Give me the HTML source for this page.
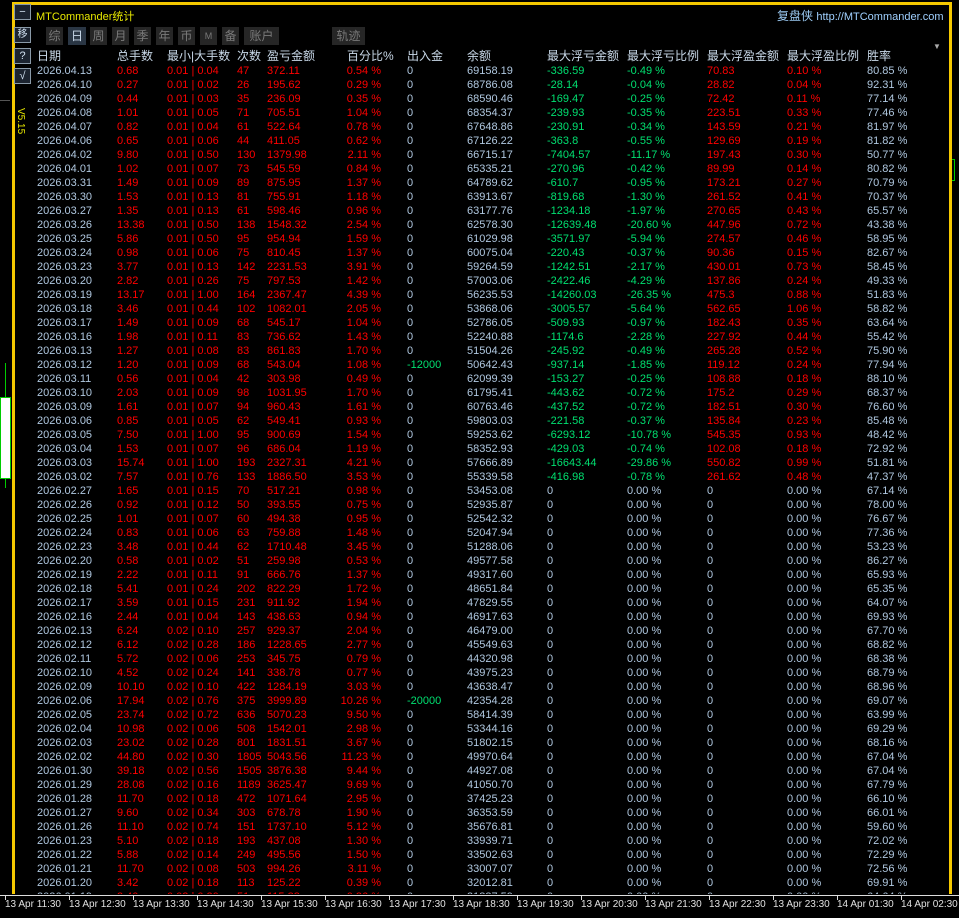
<!DOCTYPE html>
<html><head><meta charset="utf-8">
<style>
*{margin:0;padding:0;box-sizing:border-box}
body{width:959px;height:918px;background:#000;overflow:hidden;position:relative;font-family:"Liberation Sans","Noto Sans CJK SC",sans-serif;font-size:11px;color:#b0c8e0}
.yl{position:absolute;background:#f5c800}
.btn{position:absolute;width:17px;height:16px;border:1px solid #8a9aa8;background:#1c2430;color:#d0e0f0;font-size:11px;line-height:14px;text-align:center}
.tab{position:absolute;top:27px;height:18px;background:#262626;color:#7a7a7a;font-size:12px;line-height:18px;text-align:center}
.tab.on{background:#2a3644;color:#c8d8e8}
#tb{position:absolute;left:14px;top:0;width:936px;height:894px;overflow:hidden}
.h{position:absolute;top:48px;left:0;width:940px;height:16px;font-size:12px;line-height:16px;color:#c8d8e8}
.h span{position:absolute;white-space:nowrap}
.r{position:absolute;left:0;width:940px;height:14px;line-height:14px;white-space:nowrap}
.r span{position:absolute}
.r span:nth-child(1){left:23px}
.r span:nth-child(2){left:103px;color:#f00}
.r span:nth-child(3){left:153px;color:#f00}
.r span:nth-child(4){left:223px;color:#f00}
.r span:nth-child(5){left:253px;color:#f00}
.r span:nth-child(6){left:313px;width:54px;text-align:right;color:#f00}
.r span:nth-child(7){left:393px}
.r span:nth-child(8){left:453px}
.r span:nth-child(9){left:533px;color:#00e070}
.r span:nth-child(10){left:613px;color:#00e070}
.r span:nth-child(11){left:693px;color:#f00}
.r span:nth-child(12){left:773px;color:#f00}
.r span:nth-child(13){left:853px}
.r span.g{color:#00e070}
.z span:nth-child(9),.z span:nth-child(10),.z span:nth-child(11),.z span:nth-child(12){color:#b0c8e0}
.ax{position:absolute;top:895px;left:0;width:959px;height:1px;background:#ddd}
.tk{position:absolute;top:896px;width:1px;height:4px;background:#ddd}
.tl{position:absolute;top:899px;color:#e0e0e0;font-size:10px;white-space:nowrap}
</style></head><body>
<div class="yl" style="left:12px;top:2px;width:940px;height:3px"></div>
<div class="yl" style="left:12px;top:2px;width:3px;height:892px"></div>
<div class="yl" style="left:949px;top:2px;width:3px;height:892px"></div>
<div style="position:absolute;left:0;top:100px;width:10px;height:1px;background:#555"></div>
<div style="position:absolute;left:5px;top:363px;width:1px;height:125px;background:#0c0"></div>
<div style="position:absolute;left:0;top:397px;width:11px;height:82px;background:#fff;border:1px solid #0c0"></div>
<div style="position:absolute;left:952px;top:159px;width:3px;height:22px;border:1px solid #0c0;border-left:none"></div>

<div class="btn" style="left:14px;top:4px">−</div>
<div class="btn" style="left:14px;top:27px;font-size:10px">移</div>
<div class="btn" style="left:14px;top:48px">?</div>
<div class="btn" style="left:14px;top:68px">√</div>
<div style="position:absolute;left:36px;top:8px;color:#e8e800;font-size:11px">MTCommander统计</div>
<div style="position:absolute;left:777px;top:7px;color:#9ac8f0;font-size:12px">复盘侠 <span style="font-size:11px;color:#a0d0ff">http://MTCommander.com</span></div>
<div style="position:absolute;top:108px;color:#e8e800;font-size:10px;transform:rotate(90deg);transform-origin:left top;left:26px">V5.15</div>
<div style="position:absolute;left:933px;top:42px;color:#aaa;font-size:8px">▼</div>

<div class="tab" style="left:46px;width:17px">综</div>
<div class="tab on" style="left:68px;width:18px">日</div>
<div class="tab" style="left:90px;width:17px">周</div>
<div class="tab" style="left:112px;width:17px">月</div>
<div class="tab" style="left:134px;width:17px">季</div>
<div class="tab" style="left:156px;width:17px">年</div>
<div class="tab" style="left:178px;width:17px">币</div>
<div class="tab" style="left:200px;width:17px;font-size:9px">M</div>
<div class="tab" style="left:222px;width:17px">备</div>
<div class="tab" style="left:244px;width:35px">账户</div>
<div class="tab" style="left:332px;width:33px">轨迹</div>

<div id="tb">
<div class="h"><span style="left:23px">日期</span><span style="left:103px">总手数</span><span style="left:153px">最小|大手数</span><span style="left:223px">次数</span><span style="left:253px">盈亏金额</span><span style="left:333px">百分比%</span><span style="left:393px">出入金</span><span style="left:453px">余额</span><span style="left:533px">最大浮亏金额</span><span style="left:613px">最大浮亏比例</span><span style="left:693px">最大浮盈金额</span><span style="left:773px">最大浮盈比例</span><span style="left:853px">胜率</span></div>

<div class="r" style="top:64px"><span>2026.04.13</span><span>0.68</span><span>0.01 | 0.04</span><span>47</span><span>372.11</span><span>0.54 %</span><span>0</span><span>69158.19</span><span>-336.59</span><span>-0.49 %</span><span>70.83</span><span>0.10 %</span><span>80.85 %</span></div>
<div class="r" style="top:78px"><span>2026.04.10</span><span>0.27</span><span>0.01 | 0.02</span><span>26</span><span>195.62</span><span>0.29 %</span><span>0</span><span>68786.08</span><span>-28.14</span><span>-0.04 %</span><span>28.82</span><span>0.04 %</span><span>92.31 %</span></div>
<div class="r" style="top:92px"><span>2026.04.09</span><span>0.44</span><span>0.01 | 0.03</span><span>35</span><span>236.09</span><span>0.35 %</span><span>0</span><span>68590.46</span><span>-169.47</span><span>-0.25 %</span><span>72.42</span><span>0.11 %</span><span>77.14 %</span></div>
<div class="r" style="top:106px"><span>2026.04.08</span><span>1.01</span><span>0.01 | 0.05</span><span>71</span><span>705.51</span><span>1.04 %</span><span>0</span><span>68354.37</span><span>-239.93</span><span>-0.35 %</span><span>223.51</span><span>0.33 %</span><span>77.46 %</span></div>
<div class="r" style="top:120px"><span>2026.04.07</span><span>0.82</span><span>0.01 | 0.04</span><span>61</span><span>522.64</span><span>0.78 %</span><span>0</span><span>67648.86</span><span>-230.91</span><span>-0.34 %</span><span>143.59</span><span>0.21 %</span><span>81.97 %</span></div>
<div class="r" style="top:134px"><span>2026.04.06</span><span>0.65</span><span>0.01 | 0.06</span><span>44</span><span>411.05</span><span>0.62 %</span><span>0</span><span>67126.22</span><span>-363.8</span><span>-0.55 %</span><span>129.69</span><span>0.19 %</span><span>81.82 %</span></div>
<div class="r" style="top:148px"><span>2026.04.02</span><span>9.80</span><span>0.01 | 0.50</span><span>130</span><span>1379.98</span><span>2.11 %</span><span>0</span><span>66715.17</span><span>-7404.57</span><span>-11.17 %</span><span>197.43</span><span>0.30 %</span><span>50.77 %</span></div>
<div class="r" style="top:162px"><span>2026.04.01</span><span>1.02</span><span>0.01 | 0.07</span><span>73</span><span>545.59</span><span>0.84 %</span><span>0</span><span>65335.21</span><span>-270.96</span><span>-0.42 %</span><span>89.99</span><span>0.14 %</span><span>80.82 %</span></div>
<div class="r" style="top:176px"><span>2026.03.31</span><span>1.49</span><span>0.01 | 0.09</span><span>89</span><span>875.95</span><span>1.37 %</span><span>0</span><span>64789.62</span><span>-610.7</span><span>-0.95 %</span><span>173.21</span><span>0.27 %</span><span>70.79 %</span></div>
<div class="r" style="top:190px"><span>2026.03.30</span><span>1.53</span><span>0.01 | 0.13</span><span>81</span><span>755.91</span><span>1.18 %</span><span>0</span><span>63913.67</span><span>-819.68</span><span>-1.30 %</span><span>261.52</span><span>0.41 %</span><span>70.37 %</span></div>
<div class="r" style="top:204px"><span>2026.03.27</span><span>1.35</span><span>0.01 | 0.13</span><span>61</span><span>598.46</span><span>0.96 %</span><span>0</span><span>63177.76</span><span>-1234.18</span><span>-1.97 %</span><span>270.65</span><span>0.43 %</span><span>65.57 %</span></div>
<div class="r" style="top:218px"><span>2026.03.26</span><span>13.38</span><span>0.01 | 0.50</span><span>138</span><span>1548.32</span><span>2.54 %</span><span>0</span><span>62578.30</span><span>-12639.48</span><span>-20.60 %</span><span>447.96</span><span>0.72 %</span><span>43.38 %</span></div>
<div class="r" style="top:232px"><span>2026.03.25</span><span>5.86</span><span>0.01 | 0.50</span><span>95</span><span>954.94</span><span>1.59 %</span><span>0</span><span>61029.98</span><span>-3571.97</span><span>-5.94 %</span><span>274.57</span><span>0.46 %</span><span>58.95 %</span></div>
<div class="r" style="top:246px"><span>2026.03.24</span><span>0.98</span><span>0.01 | 0.06</span><span>75</span><span>810.45</span><span>1.37 %</span><span>0</span><span>60075.04</span><span>-220.43</span><span>-0.37 %</span><span>90.36</span><span>0.15 %</span><span>82.67 %</span></div>
<div class="r" style="top:260px"><span>2026.03.23</span><span>3.77</span><span>0.01 | 0.13</span><span>142</span><span>2231.53</span><span>3.91 %</span><span>0</span><span>59264.59</span><span>-1242.51</span><span>-2.17 %</span><span>430.01</span><span>0.73 %</span><span>58.45 %</span></div>
<div class="r" style="top:274px"><span>2026.03.20</span><span>2.82</span><span>0.01 | 0.26</span><span>75</span><span>797.53</span><span>1.42 %</span><span>0</span><span>57003.06</span><span>-2422.46</span><span>-4.29 %</span><span>137.86</span><span>0.24 %</span><span>49.33 %</span></div>
<div class="r" style="top:288px"><span>2026.03.19</span><span>13.17</span><span>0.01 | 1.00</span><span>164</span><span>2367.47</span><span>4.39 %</span><span>0</span><span>56235.53</span><span>-14260.03</span><span>-26.35 %</span><span>475.3</span><span>0.88 %</span><span>51.83 %</span></div>
<div class="r" style="top:302px"><span>2026.03.18</span><span>3.46</span><span>0.01 | 0.44</span><span>102</span><span>1082.01</span><span>2.05 %</span><span>0</span><span>53868.06</span><span>-3005.57</span><span>-5.64 %</span><span>562.65</span><span>1.06 %</span><span>58.82 %</span></div>
<div class="r" style="top:316px"><span>2026.03.17</span><span>1.49</span><span>0.01 | 0.09</span><span>68</span><span>545.17</span><span>1.04 %</span><span>0</span><span>52786.05</span><span>-509.93</span><span>-0.97 %</span><span>182.43</span><span>0.35 %</span><span>63.64 %</span></div>
<div class="r" style="top:330px"><span>2026.03.16</span><span>1.98</span><span>0.01 | 0.11</span><span>83</span><span>736.62</span><span>1.43 %</span><span>0</span><span>52240.88</span><span>-1174.6</span><span>-2.28 %</span><span>227.92</span><span>0.44 %</span><span>55.42 %</span></div>
<div class="r" style="top:344px"><span>2026.03.13</span><span>1.27</span><span>0.01 | 0.08</span><span>83</span><span>861.83</span><span>1.70 %</span><span>0</span><span>51504.26</span><span>-245.92</span><span>-0.49 %</span><span>265.28</span><span>0.52 %</span><span>75.90 %</span></div>
<div class="r" style="top:358px"><span>2026.03.12</span><span>1.20</span><span>0.01 | 0.09</span><span>68</span><span>543.04</span><span>1.08 %</span><span class="g">-12000</span><span>50642.43</span><span>-937.14</span><span>-1.85 %</span><span>119.12</span><span>0.24 %</span><span>77.94 %</span></div>
<div class="r" style="top:372px"><span>2026.03.11</span><span>0.56</span><span>0.01 | 0.04</span><span>42</span><span>303.98</span><span>0.49 %</span><span>0</span><span>62099.39</span><span>-153.27</span><span>-0.25 %</span><span>108.88</span><span>0.18 %</span><span>88.10 %</span></div>
<div class="r" style="top:386px"><span>2026.03.10</span><span>2.03</span><span>0.01 | 0.09</span><span>98</span><span>1031.95</span><span>1.70 %</span><span>0</span><span>61795.41</span><span>-443.62</span><span>-0.72 %</span><span>175.2</span><span>0.29 %</span><span>68.37 %</span></div>
<div class="r" style="top:400px"><span>2026.03.09</span><span>1.61</span><span>0.01 | 0.07</span><span>94</span><span>960.43</span><span>1.61 %</span><span>0</span><span>60763.46</span><span>-437.52</span><span>-0.72 %</span><span>182.51</span><span>0.30 %</span><span>76.60 %</span></div>
<div class="r" style="top:414px"><span>2026.03.06</span><span>0.85</span><span>0.01 | 0.05</span><span>62</span><span>549.41</span><span>0.93 %</span><span>0</span><span>59803.03</span><span>-221.58</span><span>-0.37 %</span><span>135.84</span><span>0.23 %</span><span>85.48 %</span></div>
<div class="r" style="top:428px"><span>2026.03.05</span><span>7.50</span><span>0.01 | 1.00</span><span>95</span><span>900.69</span><span>1.54 %</span><span>0</span><span>59253.62</span><span>-6293.12</span><span>-10.78 %</span><span>545.35</span><span>0.93 %</span><span>48.42 %</span></div>
<div class="r" style="top:442px"><span>2026.03.04</span><span>1.53</span><span>0.01 | 0.07</span><span>96</span><span>686.04</span><span>1.19 %</span><span>0</span><span>58352.93</span><span>-429.03</span><span>-0.74 %</span><span>102.08</span><span>0.18 %</span><span>72.92 %</span></div>
<div class="r" style="top:456px"><span>2026.03.03</span><span>15.74</span><span>0.01 | 1.00</span><span>193</span><span>2327.31</span><span>4.21 %</span><span>0</span><span>57666.89</span><span>-16643.44</span><span>-29.86 %</span><span>550.82</span><span>0.99 %</span><span>51.81 %</span></div>
<div class="r" style="top:470px"><span>2026.03.02</span><span>7.57</span><span>0.01 | 0.76</span><span>133</span><span>1886.50</span><span>3.53 %</span><span>0</span><span>55339.58</span><span>-416.98</span><span>-0.78 %</span><span>261.62</span><span>0.48 %</span><span>47.37 %</span></div>
<div class="r z" style="top:484px"><span>2026.02.27</span><span>1.65</span><span>0.01 | 0.15</span><span>70</span><span>517.21</span><span>0.98 %</span><span>0</span><span>53453.08</span><span>0</span><span>0.00 %</span><span>0</span><span>0.00 %</span><span>67.14 %</span></div>
<div class="r z" style="top:498px"><span>2026.02.26</span><span>0.92</span><span>0.01 | 0.12</span><span>50</span><span>393.55</span><span>0.75 %</span><span>0</span><span>52935.87</span><span>0</span><span>0.00 %</span><span>0</span><span>0.00 %</span><span>78.00 %</span></div>
<div class="r z" style="top:512px"><span>2026.02.25</span><span>1.01</span><span>0.01 | 0.07</span><span>60</span><span>494.38</span><span>0.95 %</span><span>0</span><span>52542.32</span><span>0</span><span>0.00 %</span><span>0</span><span>0.00 %</span><span>76.67 %</span></div>
<div class="r z" style="top:526px"><span>2026.02.24</span><span>0.83</span><span>0.01 | 0.06</span><span>63</span><span>759.88</span><span>1.48 %</span><span>0</span><span>52047.94</span><span>0</span><span>0.00 %</span><span>0</span><span>0.00 %</span><span>77.36 %</span></div>
<div class="r z" style="top:540px"><span>2026.02.23</span><span>3.48</span><span>0.01 | 0.44</span><span>62</span><span>1710.48</span><span>3.45 %</span><span>0</span><span>51288.06</span><span>0</span><span>0.00 %</span><span>0</span><span>0.00 %</span><span>53.23 %</span></div>
<div class="r z" style="top:554px"><span>2026.02.20</span><span>0.58</span><span>0.01 | 0.02</span><span>51</span><span>259.98</span><span>0.53 %</span><span>0</span><span>49577.58</span><span>0</span><span>0.00 %</span><span>0</span><span>0.00 %</span><span>86.27 %</span></div>
<div class="r z" style="top:568px"><span>2026.02.19</span><span>2.22</span><span>0.01 | 0.11</span><span>91</span><span>666.76</span><span>1.37 %</span><span>0</span><span>49317.60</span><span>0</span><span>0.00 %</span><span>0</span><span>0.00 %</span><span>65.93 %</span></div>
<div class="r z" style="top:582px"><span>2026.02.18</span><span>5.41</span><span>0.01 | 0.24</span><span>202</span><span>822.29</span><span>1.72 %</span><span>0</span><span>48651.84</span><span>0</span><span>0.00 %</span><span>0</span><span>0.00 %</span><span>65.35 %</span></div>
<div class="r z" style="top:596px"><span>2026.02.17</span><span>3.59</span><span>0.01 | 0.15</span><span>231</span><span>911.92</span><span>1.94 %</span><span>0</span><span>47829.55</span><span>0</span><span>0.00 %</span><span>0</span><span>0.00 %</span><span>64.07 %</span></div>
<div class="r z" style="top:610px"><span>2026.02.16</span><span>2.44</span><span>0.01 | 0.04</span><span>143</span><span>438.63</span><span>0.94 %</span><span>0</span><span>46917.63</span><span>0</span><span>0.00 %</span><span>0</span><span>0.00 %</span><span>69.93 %</span></div>
<div class="r z" style="top:624px"><span>2026.02.13</span><span>6.24</span><span>0.02 | 0.10</span><span>257</span><span>929.37</span><span>2.04 %</span><span>0</span><span>46479.00</span><span>0</span><span>0.00 %</span><span>0</span><span>0.00 %</span><span>67.70 %</span></div>
<div class="r z" style="top:638px"><span>2026.02.12</span><span>6.12</span><span>0.02 | 0.28</span><span>186</span><span>1228.65</span><span>2.77 %</span><span>0</span><span>45549.63</span><span>0</span><span>0.00 %</span><span>0</span><span>0.00 %</span><span>68.82 %</span></div>
<div class="r z" style="top:652px"><span>2026.02.11</span><span>5.72</span><span>0.02 | 0.06</span><span>253</span><span>345.75</span><span>0.79 %</span><span>0</span><span>44320.98</span><span>0</span><span>0.00 %</span><span>0</span><span>0.00 %</span><span>68.38 %</span></div>
<div class="r z" style="top:666px"><span>2026.02.10</span><span>4.52</span><span>0.02 | 0.24</span><span>141</span><span>338.78</span><span>0.77 %</span><span>0</span><span>43975.23</span><span>0</span><span>0.00 %</span><span>0</span><span>0.00 %</span><span>68.79 %</span></div>
<div class="r z" style="top:680px"><span>2026.02.09</span><span>10.10</span><span>0.02 | 0.10</span><span>422</span><span>1284.19</span><span>3.03 %</span><span>0</span><span>43638.47</span><span>0</span><span>0.00 %</span><span>0</span><span>0.00 %</span><span>68.96 %</span></div>
<div class="r z" style="top:694px"><span>2026.02.06</span><span>17.94</span><span>0.02 | 0.76</span><span>375</span><span>3999.89</span><span>10.26 %</span><span class="g">-20000</span><span>42354.28</span><span>0</span><span>0.00 %</span><span>0</span><span>0.00 %</span><span>69.07 %</span></div>
<div class="r z" style="top:708px"><span>2026.02.05</span><span>23.74</span><span>0.02 | 0.72</span><span>636</span><span>5070.23</span><span>9.50 %</span><span>0</span><span>58414.39</span><span>0</span><span>0.00 %</span><span>0</span><span>0.00 %</span><span>63.99 %</span></div>
<div class="r z" style="top:722px"><span>2026.02.04</span><span>10.98</span><span>0.02 | 0.06</span><span>508</span><span>1542.01</span><span>2.98 %</span><span>0</span><span>53344.16</span><span>0</span><span>0.00 %</span><span>0</span><span>0.00 %</span><span>69.29 %</span></div>
<div class="r z" style="top:736px"><span>2026.02.03</span><span>23.02</span><span>0.02 | 0.28</span><span>801</span><span>1831.51</span><span>3.67 %</span><span>0</span><span>51802.15</span><span>0</span><span>0.00 %</span><span>0</span><span>0.00 %</span><span>68.16 %</span></div>
<div class="r z" style="top:750px"><span>2026.02.02</span><span>44.80</span><span>0.02 | 0.30</span><span>1805</span><span>5043.56</span><span>11.23 %</span><span>0</span><span>49970.64</span><span>0</span><span>0.00 %</span><span>0</span><span>0.00 %</span><span>67.04 %</span></div>
<div class="r z" style="top:764px"><span>2026.01.30</span><span>39.18</span><span>0.02 | 0.56</span><span>1505</span><span>3876.38</span><span>9.44 %</span><span>0</span><span>44927.08</span><span>0</span><span>0.00 %</span><span>0</span><span>0.00 %</span><span>67.04 %</span></div>
<div class="r z" style="top:778px"><span>2026.01.29</span><span>28.08</span><span>0.02 | 0.16</span><span>1189</span><span>3625.47</span><span>9.69 %</span><span>0</span><span>41050.70</span><span>0</span><span>0.00 %</span><span>0</span><span>0.00 %</span><span>67.79 %</span></div>
<div class="r z" style="top:792px"><span>2026.01.28</span><span>11.70</span><span>0.02 | 0.18</span><span>472</span><span>1071.64</span><span>2.95 %</span><span>0</span><span>37425.23</span><span>0</span><span>0.00 %</span><span>0</span><span>0.00 %</span><span>66.10 %</span></div>
<div class="r z" style="top:806px"><span>2026.01.27</span><span>9.60</span><span>0.02 | 0.34</span><span>303</span><span>678.78</span><span>1.90 %</span><span>0</span><span>36353.59</span><span>0</span><span>0.00 %</span><span>0</span><span>0.00 %</span><span>66.01 %</span></div>
<div class="r z" style="top:820px"><span>2026.01.26</span><span>11.10</span><span>0.02 | 0.74</span><span>151</span><span>1737.10</span><span>5.12 %</span><span>0</span><span>35676.81</span><span>0</span><span>0.00 %</span><span>0</span><span>0.00 %</span><span>59.60 %</span></div>
<div class="r z" style="top:834px"><span>2026.01.23</span><span>5.10</span><span>0.02 | 0.18</span><span>193</span><span>437.08</span><span>1.30 %</span><span>0</span><span>33939.71</span><span>0</span><span>0.00 %</span><span>0</span><span>0.00 %</span><span>72.02 %</span></div>
<div class="r z" style="top:848px"><span>2026.01.22</span><span>5.88</span><span>0.02 | 0.14</span><span>249</span><span>495.56</span><span>1.50 %</span><span>0</span><span>33502.63</span><span>0</span><span>0.00 %</span><span>0</span><span>0.00 %</span><span>72.29 %</span></div>
<div class="r z" style="top:862px"><span>2026.01.21</span><span>11.70</span><span>0.02 | 0.08</span><span>503</span><span>994.26</span><span>3.11 %</span><span>0</span><span>33007.07</span><span>0</span><span>0.00 %</span><span>0</span><span>0.00 %</span><span>72.56 %</span></div>
<div class="r z" style="top:876px"><span>2026.01.20</span><span>3.42</span><span>0.02 | 0.18</span><span>113</span><span>125.22</span><span>0.39 %</span><span>0</span><span>32012.81</span><span>0</span><span>0.00 %</span><span>0</span><span>0.00 %</span><span>69.91 %</span></div>
<div class="r z" style="top:890px"><span>2026.01.19</span><span>3.40</span><span>0.02 | 0.20</span><span>51</span><span>115.88</span><span>0.36 %</span><span>0</span><span>31887.59</span><span>0</span><span>0.00 %</span><span>0</span><span>0.00 %</span><span>64.64 %</span></div>
</div>

<div class="ax"></div>
<div class="tk" style="left:5px"></div><div class="tl" style="left:5px">13 Apr 11:30</div>
<div class="tk" style="left:69px"></div><div class="tl" style="left:69px">13 Apr 12:30</div>
<div class="tk" style="left:133px"></div><div class="tl" style="left:133px">13 Apr 13:30</div>
<div class="tk" style="left:197px"></div><div class="tl" style="left:197px">13 Apr 14:30</div>
<div class="tk" style="left:261px"></div><div class="tl" style="left:261px">13 Apr 15:30</div>
<div class="tk" style="left:325px"></div><div class="tl" style="left:325px">13 Apr 16:30</div>
<div class="tk" style="left:389px"></div><div class="tl" style="left:389px">13 Apr 17:30</div>
<div class="tk" style="left:453px"></div><div class="tl" style="left:453px">13 Apr 18:30</div>
<div class="tk" style="left:517px"></div><div class="tl" style="left:517px">13 Apr 19:30</div>
<div class="tk" style="left:581px"></div><div class="tl" style="left:581px">13 Apr 20:30</div>
<div class="tk" style="left:645px"></div><div class="tl" style="left:645px">13 Apr 21:30</div>
<div class="tk" style="left:709px"></div><div class="tl" style="left:709px">13 Apr 22:30</div>
<div class="tk" style="left:773px"></div><div class="tl" style="left:773px">13 Apr 23:30</div>
<div class="tk" style="left:837px"></div><div class="tl" style="left:837px">14 Apr 01:30</div>
<div class="tk" style="left:901px"></div><div class="tl" style="left:901px">14 Apr 02:30</div>
</body></html>
